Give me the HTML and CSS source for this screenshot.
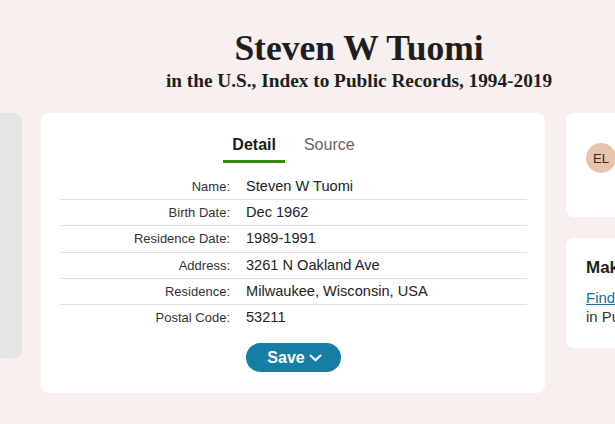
FILE: index.html
```html
<!DOCTYPE html>
<html lang="en">
<head>
<meta charset="utf-8">
<title>Steven W Tuomi</title>
<link rel="stylesheet" href="styles.css">
</head>
<body>
<header class="page-head">
  <h1 class="title">Steven W Tuomi</h1>
  <p class="subtitle">in the U.S., Index to Public Records, 1994-2019</p>
</header>
<main class="layout">
  <aside class="side-card"></aside>
  <section class="record-card">
    <nav class="tabs">
      <span class="tab tab-active">Detail</span>
      <span class="tab">Source</span>
    </nav>
    <div class="rows">
      <div class="row"><span class="label">Name:</span><span class="value">Steven W Tuomi</span></div>
      <div class="row"><span class="label">Birth Date:</span><span class="value">Dec 1962</span></div>
      <div class="row"><span class="label">Residence Date:</span><span class="value">1989-1991</span></div>
      <div class="row"><span class="label">Address:</span><span class="value">3261 N Oakland Ave</span></div>
      <div class="row"><span class="label">Residence:</span><span class="value">Milwaukee, Wisconsin, USA</span></div>
      <div class="row"><span class="label">Postal Code:</span><span class="value">53211</span></div>
    </div>
    <button class="save-btn" type="button">Save
      <svg class="chev" width="13" height="8" viewBox="0 0 13 8"><path d="M1.5 1.5 L6.5 6.2 L11.5 1.5" fill="none" stroke="#fff" stroke-width="2" stroke-linecap="round" stroke-linejoin="round"/></svg>
    </button>
  </section>
  <div class="right-col">
    <section class="mini-card owner-card">
      <span class="avatar">EL</span>
    </section>
    <section class="mini-card more-card">
      <h2 class="more-title">Make a discovery</h2>
      <p class="more-text"><a class="more-link" href="#">Find other records for Steven W Tuomi</a><br>in Public Records Index</p>
    </section>
  </div>
</main>
</body>
</html>
```

FILE: styles.css
```css
html, body {
  margin: 0;
  padding: 0;
}
body {
  background: #f7f0ee;
  width: 615px;
  height: 424px;
  overflow: hidden;
  font-family: "Liberation Sans", Arial, sans-serif;
  color: #222;
}
.page-head {
  padding: 28px 0 0 103px;
  text-align: center;
}
.title {
  margin: 0;
  font-family: "Liberation Serif", "Times New Roman", serif;
  font-weight: bold;
  font-size: 35.5px;
  line-height: 41px;
  color: #1e1e1e;
}
.subtitle {
  margin: 0;
  font-family: "Liberation Serif", "Times New Roman", serif;
  font-weight: bold;
  font-size: 19.3px;
  line-height: 24px;
  color: #1e1e1e;
}
.layout {
  display: flex;
  align-items: flex-start;
  gap: 19px;
  margin-top: 20px;
}
.side-card {
  flex: none;
  width: 42px;
  height: 245px;
  margin-left: -20px;
  background: #e6e5e5;
  border-radius: 8px;
}
.record-card {
  flex: none;
  width: 504px;
  box-sizing: border-box;
  height: 280px;
  padding: 22px 18px 0 19px;
  background: #fff;
  border-radius: 8px;
}
.tabs {
  display: flex;
  justify-content: center;
  gap: 10px;
}
.tab {
  padding: 0 9px 5px;
  font-size: 16px;
  line-height: 20px;
  color: #666;
  border-bottom: 3px solid transparent;
}
.tab-active {
  font-weight: bold;
  color: #1e1e1e;
  border-bottom-color: #3a8a16;
}
.rows {
  margin-top: 10.75px;
}
.row {
  display: grid;
  grid-template-columns: 170px 1fr;
  column-gap: 16px;
  align-items: baseline;
  line-height: 25.25px;
  border-bottom: 1px solid #e2e0df;
}
.row:last-child {
  border-bottom: none;
}
.label {
  text-align: right;
  font-size: 13px;
  color: #333;
}
.value {
  font-size: 14.6px;
  color: #222;
}
.save-btn {
  display: flex;
  align-items: center;
  justify-content: center;
  gap: 4px;
  margin: 12.75px 0 0 186px;
  width: 95px;
  height: 29px;
  padding: 0 0 0 2px;
  border: none;
  border-radius: 15px;
  background: #167ea5;
  color: #fff;
  font-family: "Liberation Sans", Arial, sans-serif;
  font-weight: bold;
  font-size: 16px;
}
.chev {
  display: block;
}
.right-col {
  flex: none;
  width: 240px;
  margin-left: 2px;
  display: flex;
  flex-direction: column;
  gap: 21px;
}
.mini-card {
  background: #fff;
  border-radius: 8px;
  box-sizing: border-box;
  padding-left: 20px;
}
.owner-card {
  height: 104px;
  padding-top: 30px;
}
.avatar {
  display: flex;
  align-items: center;
  justify-content: center;
  width: 30px;
  height: 30px;
  border-radius: 50%;
  background: #e8c2ad;
  color: #2a2a2a;
  font-size: 13px;
}
.more-card {
  height: 110px;
  padding-top: 19px;
}
.more-title {
  margin: 0;
  font-size: 17px;
  line-height: 22px;
  font-weight: bold;
  color: #1e1e1e;
}
.more-text {
  margin: 9px 0 0;
  font-size: 15px;
  line-height: 19px;
  color: #333;
  white-space: nowrap;
}
.more-link {
  color: #1a6e9c;
  text-decoration: underline;
}
```
